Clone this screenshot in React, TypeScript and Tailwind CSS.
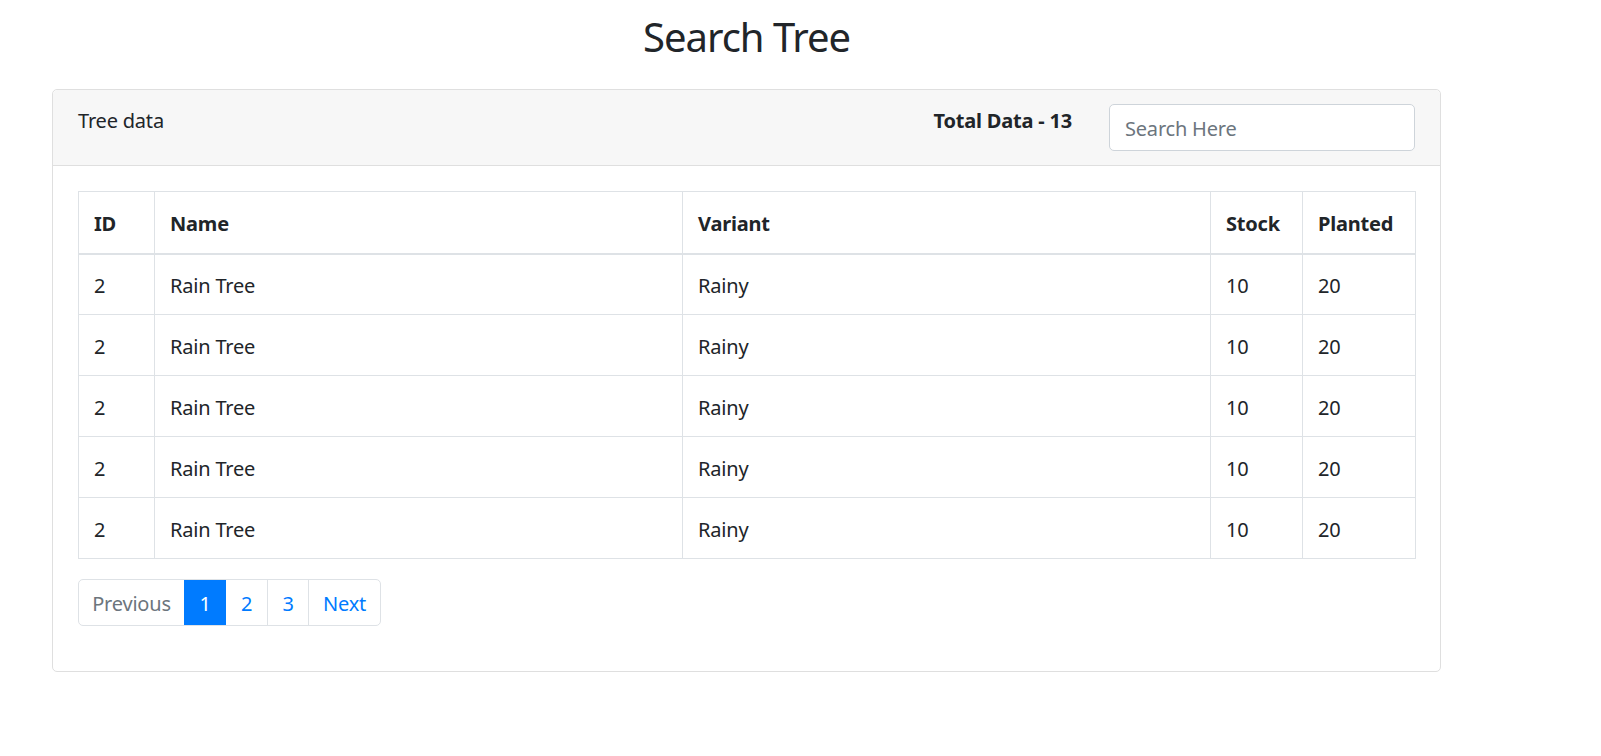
import React from "react";

const rows = [1, 2, 3, 4, 5].map(() => ({
  id: 2,
  name: "Rain Tree",
  variant: "Rainy",
  stock: 10,
  planted: 20,
}));

const font = { fontFamily: '"Segoe UI", "Noto Sans", "Open Sans", sans-serif' };

const App = () => {
  return (
    <div className="min-h-screen bg-white text-[#212529] text-[20px] leading-[30px] tracking-[-0.01em]" style={font}>
      <div className="ml-[52px] w-[1389px]">
        <h2 className="pt-[13px] pb-[28px] text-center text-[40px] leading-[48px] font-normal tracking-[-0.025em]">
          Search Tree
        </h2>

        <div className="border border-[#dfdfdf] rounded-[5px]">
          {/* card header */}
          <div className="flex justify-between items-start bg-[#f7f7f7] border-b border-[#dfdfdf] rounded-t-[5px] px-[25px] pt-[16px] pb-[14px]">
            <div>Tree data</div>
            <div className="flex items-start gap-[37px]">
              <div className="font-bold">Total Data - 13</div>
              <input
                className="w-[306px] h-[47px] -mt-[2px] border border-[#ced4da] rounded-[5px] bg-white px-[15px] pt-[2px] text-[20px] text-[#495057] placeholder:text-[#6c757d] outline-none"
                placeholder="Search Here"
                style={font}
              />
            </div>
          </div>

          {/* card body */}
          <div className="px-[25px] pt-[25px] pb-[45px]">
            <table className="w-[1337px] border-collapse table-fixed">
              <colgroup>
                <col className="w-[76px]" />
                <col className="w-[528px]" />
                <col className="w-[528px]" />
                <col className="w-[92px]" />
                <col className="w-[113px]" />
              </colgroup>
              <thead>
                <tr className="h-[62px]">
                  {["ID", "Name", "Variant", "Stock", "Planted"].map((h) => (
                    <th
                      key={h}
                      className="border border-[#dee2e6] border-b-2 px-[15px] pt-[4px] text-left font-bold align-middle"
                    >
                      {h}
                    </th>
                  ))}
                </tr>
              </thead>
              <tbody>
                {rows.map((r, i) => (
                  <tr key={i} className="h-[61px]">
                    <td className="border border-[#dee2e6] px-[15px] pt-[4px]">{r.id}</td>
                    <td className="border border-[#dee2e6] px-[15px] pt-[4px]">{r.name}</td>
                    <td className="border border-[#dee2e6] px-[15px] pt-[4px]">{r.variant}</td>
                    <td className="border border-[#dee2e6] px-[15px] pt-[4px]">{r.stock}</td>
                    <td className="border border-[#dee2e6] px-[15px] pt-[4px]">{r.planted}</td>
                  </tr>
                ))}
              </tbody>
            </table>

            <div className="mt-[20px] flex">
              <div className="flex h-[47px] border border-[#dee2e6] rounded-[5px] overflow-hidden">
                <span className="w-[105px] flex items-center justify-center pt-[2px] text-[#6c757d]">Previous</span>
                <span className="w-[42px] flex items-center justify-center pt-[2px] bg-[#007bff] text-white">1</span>
                <span className="w-[42px] flex items-center justify-center pt-[2px] text-[#007bff] border-r border-[#dee2e6]">2</span>
                <span className="w-[41px] flex items-center justify-center pt-[2px] text-[#007bff] border-r border-[#dee2e6]">3</span>
                <span className="w-[71px] flex items-center justify-center pt-[2px] text-[#007bff]">Next</span>
              </div>
            </div>
          </div>
        </div>
      </div>
    </div>
  );
};

export default App;
